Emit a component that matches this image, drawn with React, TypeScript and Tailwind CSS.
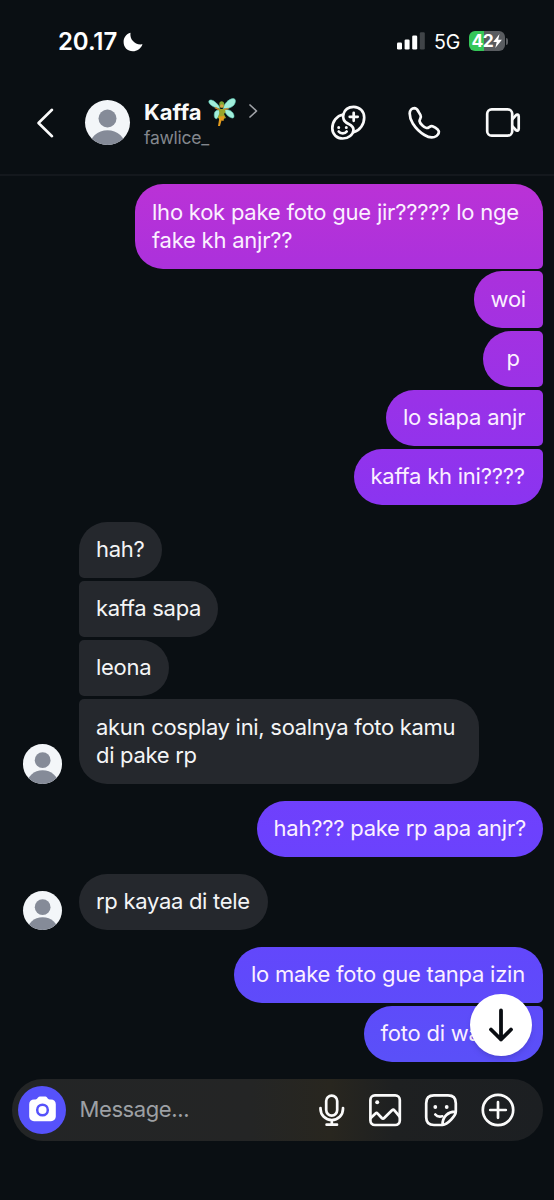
import type { ReactNode } from 'react';
import clsx from 'clsx';

type Message = { text: string; width: string; pad?: string };
type Group = { mine?: boolean; messages: Message[] };

const groups: Group[] = [
  {
    mine: true,
    messages: [
      { text: 'lho kok pake foto gue jir????? lo nge\nfake kh anjr??', width: 'w-[407.5px]' },
      { text: 'woi', width: 'w-[69px]' },
      { text: 'p', width: 'w-[59.5px]', pad: 'pl-[23.5px]' },
      { text: 'lo siapa anjr', width: 'w-[156.5px]' },
      { text: 'kaffa kh ini????', width: 'w-[189px]' },
    ],
  },
  {
    messages: [
      { text: 'hah?', width: 'w-[83px]' },
      { text: 'kaffa sapa', width: 'w-[139.5px]' },
      { text: 'leona', width: 'w-[90px]' },
      { text: 'akun cosplay ini, soalnya foto kamu\ndi pake rp', width: 'w-[400px]' },
    ],
  },
  { mine: true, messages: [{ text: 'hah??? pake rp apa anjr?', width: 'w-[286px]' }] },
  { messages: [{ text: 'rp kayaa di tele', width: 'w-[189px]' }] },
  {
    mine: true,
    messages: [
      { text: 'lo make foto gue tanpa izin', width: 'w-[308.5px]' },
      { text: 'foto di wall', width: 'w-[179px]' },
    ],
  },
];

function Avatar({ className }: { className: string }) {
  return (
    <svg viewBox="0 0 45 45" className={clsx('shrink-0 rounded-full bg-[#f3f6f9]', className)}>
      <circle cx="22.5" cy="18.5" r="9" fill="#858b98" />
      <ellipse cx="22.5" cy="46.5" rx="18" ry="16.3" fill="#858b98" />
    </svg>
  );
}

function Icon({ children, className, size = 40, stroke = 2.7 }: { children: ReactNode; className?: string; size?: number; stroke?: number }) {
  return (
    <svg
      viewBox={`0 0 ${size} ${size}`}
      width={size}
      height={size}
      fill="none"
      stroke="#fafafa"
      strokeWidth={stroke}
      strokeLinecap="round"
      strokeLinejoin="round"
      className={clsx('shrink-0', className)}
    >
      {children}
    </svg>
  );
}

function Fairy() {
  return (
    <svg viewBox="0 0 28 29" className="ml-[7px] h-[29px] w-[28px] shrink-0">
      <g fill="#a0eedb" stroke="#62cdb8" strokeWidth="0.6">
        <path d="M12 10.500C8 10.500 1.500 7.500 .8 4C.5 1.300 4 1.500 6.500 3.500C9 5.500 11.500 8 12 10.500Z" />
        <path d="M15 10.500C16 6 20.500 1 25 .6C28.500.5 27.800 5 25.500 7.500C23 10 19 11 15 10.500Z" />
        <path d="M12 12C9 11.500 6.500 13 6.300 16C6 19 7 21.500 9 20.500C11 19 12 15.500 12 12Z" />
        <path d="M16 12C19 11 23 12 25 15C26.500 17.500 26.500 20.500 24 20C20.500 19 17.500 16 16 12Z" />
      </g>
      <path d="M11.300 6C11 2.500 16 2 16.300 6L16 9.500L11.500 9.500Z" fill="#82a832" />
      <circle cx="13.800" cy="8" r="1.700" fill="#d9a046" />
      <path d="M10.500 11L17 11L17.500 14L16 16L18 20L14 21.500L9.500 20L11.500 15Z" fill="#9aa52a" />
      <path d="M11 18.500L16.500 18L15.500 23L13.500 22.500L12 28L10 28L11 22Z" fill="#e39b1e" />
      <path d="M16 11.500L20.500 10.500M11 11.500L7 9.500" stroke="#c58c34" strokeWidth="1.500" />
    </svg>
  );
}

function StatusBar() {
  return (
    <div className="flex h-[82px] items-center pl-[58px] text-white">
      <span className="mt-[2px] w-[64px] text-[24px] font-semibold leading-none tracking-[-0.1px]">20.17</span>
      <svg viewBox="0 0 20 20" className="ml-[0.5px] mt-[2px] size-[20px]">
        <path d="M7.500 .8C6.500 7.500 12 13.500 19.500 12.300C17.800 17 14 19.300 9.800 19.300C4.500 19.300 .6 15.300 .6 10C.6 5.600 3.200 2 7.500 .8Z" fill="#fff" />
      </svg>
      <svg viewBox="0 0 28 18" className="ml-[254.5px] h-[18px] w-[28px]" fill="#fff">
        <rect x="0" y="10.500" width="5" height="7" rx="1.300" />
        <rect x="7.600" y="7.500" width="5" height="10" rx="1.300" />
        <rect x="15.200" y="3.500" width="5" height="14" rx="1.300" />
        <rect x="22.800" y=".3" width="5" height="17.200" rx="1.300" fill="#404448" />
      </svg>
      <span className="ml-[9px] mt-[3px] w-[35px] text-[19.5px] leading-none">5G</span>
      <div className="flex h-[20px] w-[36px] items-center justify-center overflow-hidden rounded-[6px] bg-[linear-gradient(90deg,#35c759_43%,#595c60_43%)]">
        <span className="text-[17.5px] font-bold leading-none tracking-[-0.7px]">42</span>
        <svg viewBox="0 0 9 14" className="ml-[0.5px] h-[14px] w-[9px]">
          <path d="M6.500 0L.2 7.900H3.700L2.300 14L8.900 5.700H5.200Z" fill="#fff" />
        </svg>
      </div>
      <div className="ml-px h-[7px] w-[2px] rounded-r-full bg-[#5a5d61]" />
    </div>
  );
}

function Header() {
  return (
    <div className="flex h-[94px] border-b-2 border-[#14181d] pt-[18px]">
      <svg viewBox="0 0 20 32" className="ml-[34.5px] mt-[6.5px] h-[32px] w-[20px] shrink-0" fill="none" stroke="#fafafa" strokeWidth="2.600" strokeLinecap="round" strokeLinejoin="round">
        <path d="M17 2.800L3.500 16L17 29.200" />
      </svg>
      <Avatar className="ml-[30px] size-[45px]" />
      <div className="ml-[14.5px] w-[184px] shrink-0">
        <div className="flex h-[24px] items-center">
          <span className="w-[57px] text-[22px] font-bold leading-none text-[#fafafa]">Kaffa</span>
          <Fairy />
          <svg viewBox="0 0 10 16" className="ml-[11.5px] mt-[-2px] h-[16px] w-[10px]" fill="none" stroke="#a0a3a8" strokeWidth="1.700" strokeLinecap="round" strokeLinejoin="round">
            <path d="M2 2L8.500 8L2 14" />
          </svg>
        </div>
        <div className="mt-[3px] text-[17.5px] leading-[22px] tracking-[-0.25px] text-[#83878d]">fawlice_</div>
      </div>
      <Icon className="mt-[3px]">
        <path d="M15.300 11.500C16.500 6.800 20.500 3.800 25.700 3.800C31.800 3.800 36.200 8.500 36.200 14.500C36.200 21.500 32 27.300 25.500 29.300" />
        <path d="M15.300 11.500C8.500 12.800 4.300 18.500 4.300 25.300C4.300 31.300 9 35.500 14.700 35.500C20.500 35.500 25.200 31.500 25.500 27C25.700 20.500 17.500 22 15.700 16.500C15.100 14.800 15 13 15.300 11.500Z" />
        <path d="M25.700 9.800V17.800M21.700 13.800H29.700" />
        <path d="M10.700 24.500V24.600M18.300 24.500V24.600" strokeWidth="3" />
        <path d="M10.700 28.500C12.500 31 17 31 18.700 28.500" />
      </Icon>
      <Icon className="ml-[36px] mt-[3px]">
        <path d="M5.700 10.500C5.700 7.500 7.800 5.300 10.500 5.200C12.800 5.200 13.500 7 14.600 8.900L16.500 12.200C17.900 14.700 15.300 16 15.500 18C15.800 20.500 20 24.500 22.500 25C25 25.300 26 22.300 28.500 23.300C30.500 24.100 32.500 25.400 33.700 26.500C35.800 28.500 34.700 31.500 32.500 33C29 35.300 24.500 34.500 20.500 32C15.500 29 11.500 24.800 8.800 20.500C6.800 17.200 5.700 13.500 5.700 10.500Z" />
      </Icon>
      <Icon className="ml-[39px] mt-[3px]">
        <rect x="4.200" y="6.300" width="25" height="26.400" rx="4.500" />
        <path d="M29.500 16L32.800 12.300C34 11 35.700 11.500 35.700 13.300V26C35.700 27.700 34 28.300 32.800 27L29.500 23.300" />
      </Icon>
    </div>
  );
}

function Bubble({ message, mine, first, last }: { message: Message; mine?: boolean; first: boolean; last: boolean }) {
  return (
    <div
      className={clsx(
        'shrink-0 whitespace-pre rounded-[28px] pb-[14.6px] pt-[13.4px] text-[22px] leading-[28.2px]',
        message.width,
        message.pad ?? 'pl-[17px]',
        mine
          ? 'bg-[linear-gradient(180deg,#bb32d6_180px,#ab31dc_270px,#9932e8_400px,#8b34f0_500px,#6d41fd_829px,#6049fb_975px,#5a50f8_1060px)] bg-fixed tracking-[-0.23px] text-[#fbf0ff]'
          : 'bg-[#25282d] tracking-[-0.29px] text-[#f4f5f6]',
        mine && !first && 'rounded-tr-[5px]',
        mine && !last && 'rounded-br-[5px]',
        !mine && !first && 'rounded-tl-[5px]',
        !mine && !last && 'rounded-bl-[5px]',
      )}
    >
      {message.text}
    </div>
  );
}

function Composer() {
  return (
    <div className="mx-[11.5px] mt-[16.7px] flex h-[62px] items-center rounded-full bg-[linear-gradient(90deg,#232526_0%,#242525_45%,#28261f_60%,#1e2021_72%,#1c1f22_100%)] pl-[6.5px]">
      <div className="flex size-[48px] items-center justify-center rounded-full bg-[#5652fb]">
        <svg viewBox="0 0 27 26" className="mt-[-2px] h-[26px] w-[27px]">
          <path d="M9 1.500C9.500 .8 10.300.5 11 .5H16C16.800.5 17.600.8 18 1.500L19 2.700C19.400 3.200 20 3.500 20.700 3.500H22C24.800 3.500 26.800 5.500 26.800 8.200V20.600C26.800 23.300 24.800 25.300 22 25.300H5C2.200 25.300.2 23.300.2 20.600V8.200C.2 5.500 2.200 3.500 5 3.500H6.300C7 3.500 7.600 3.200 8 2.700Z" fill="#fff" />
          <circle cx="13.500" cy="14" r="5.300" fill="none" stroke="#5652fb" strokeWidth="2.500" />
        </svg>
      </div>
      <span className="ml-[13.5px] w-[234px] text-[22px] tracking-[-0.4px] text-[#9da0a4]">Message...</span>
      <Icon size={36}>
        <rect x="12.200" y="3.600" width="11" height="20" rx="5.500" />
        <path d="M6.500 16V16.700C6.500 23 11.500 28 17.800 28S29 23 29 16.700V16M17.800 28V32.700M12.600 32.700H23" />
      </Icon>
      <Icon size={36} className="ml-[17px]">
        <rect x="3.400" y="3.400" width="29.400" height="29.600" rx="4.500" />
        <path d="M4 25.700L8.500 21.500C9.200 20.900 10 20.900 10.700 21.600L14.800 26C15.500 26.700 16.500 26.700 17.200 26L25 18.300C25.800 17.600 26.700 17.600 27.400 18.400L32.600 24.500" />
        <circle cx="10.200" cy="10.200" r="2" fill="#fafafa" stroke="none" />
      </Icon>
      <Icon size={36} className="ml-[20.5px]">
        <path d="M19.500 33H11C6 33 3.200 30.200 3.200 25.200V11.200C3.200 6.200 6 3.400 11 3.400H25C30 3.400 32.800 6.200 32.800 11.200V19.600C32.800 24 24.500 32.500 19.500 33ZM32.800 19.600C25.500 19.200 19.300 24.500 19.500 33" />
        <path d="M12.300 22.500C14 24.600 16.500 25 19.300 24.300" />
        <path d="M12.300 15V15.100M23.700 15V15.100" strokeWidth="3.800" />
      </Icon>
      <Icon size={36} className="ml-[20.5px]">
        <circle cx="18" cy="18" r="15.200" />
        <path d="M18 10.200V25.800M10.200 18H25.800" />
      </Icon>
    </div>
  );
}

export default function App() {
  return (
    <div className="h-[1200px] w-[554px] overflow-hidden bg-[#0a0f13] font-['Inter',sans-serif]">
      <StatusBar />
      <Header />
      <div className="relative flex flex-col gap-[17px] pl-[22.5px] pr-[11.5px] pt-[8.2px]">
        {groups.map((group, i) => (
          <div key={i} className={clsx('flex items-end', group.mine && 'justify-end')}>
            {!group.mine && <Avatar className="mr-[17.2px] size-[39.3px]" />}
            <div className={clsx('flex flex-col gap-[2.9px]', group.mine ? 'items-end' : 'items-start')}>
              {group.messages.map((message, j) => (
                <Bubble key={message.text} message={message} mine={group.mine} first={j === 0} last={j === group.messages.length - 1} />
              ))}
            </div>
          </div>
        ))}
        {/* Scroll to latest */}
        <button aria-label="Scroll to bottom" className="absolute bottom-[6px] right-[22.5px] flex size-[62px] items-center justify-center rounded-full bg-white shadow-md">
          <svg viewBox="0 0 26 36" className="h-[36px] w-[26px]" fill="none" stroke="#0a0d12" strokeWidth="3.800" strokeLinecap="round" strokeLinejoin="round">
            <path d="M13 3.500V32.500M3 22.500L13 32.500L23 22.500" />
          </svg>
        </button>
      </div>
      <Composer />
    </div>
  );
}
